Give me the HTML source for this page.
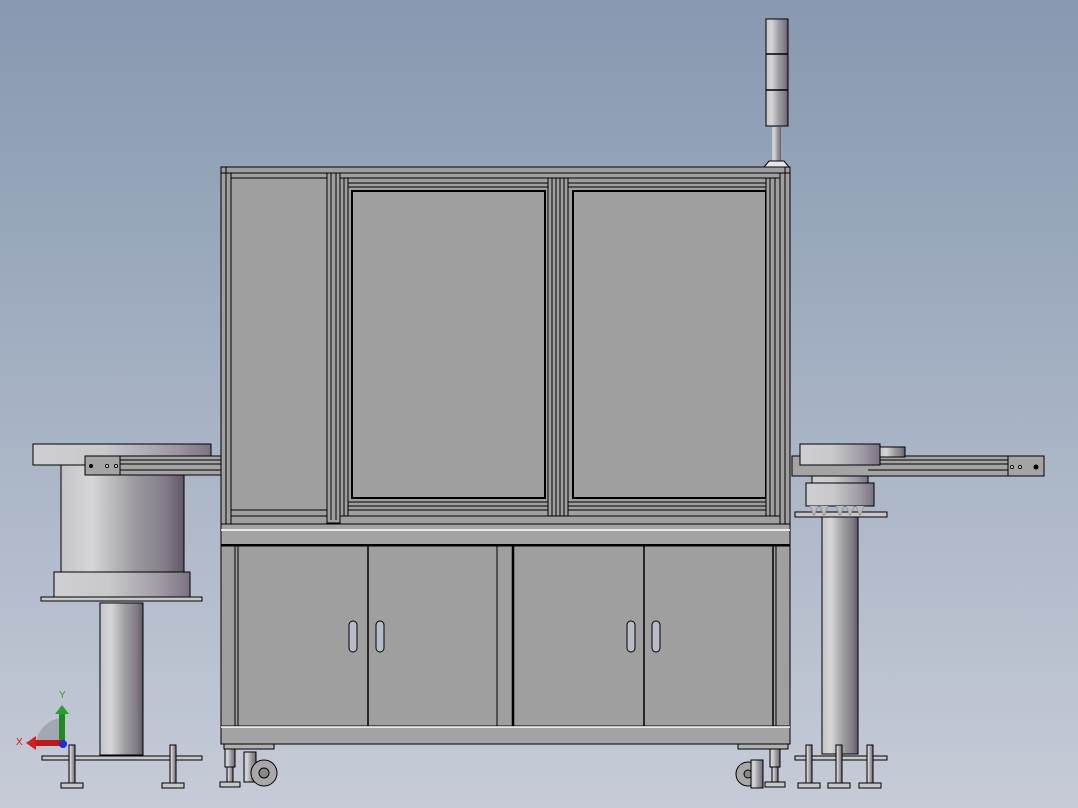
<!DOCTYPE html>
<html><head><meta charset="utf-8"><style>
html,body{margin:0;padding:0;width:1078px;height:808px;overflow:hidden}
svg{display:block}
</style></head><body>
<svg width="1078" height="808" viewBox="0 0 1078 808" xmlns="http://www.w3.org/2000/svg">
<defs>
<linearGradient id="bg" x1="0" y1="0" x2="0" y2="1">
<stop offset="0" stop-color="#8798b0"/><stop offset="0.5" stop-color="#a6b2c4"/><stop offset="1" stop-color="#c6cbd7"/>
</linearGradient>
<linearGradient id="cyl" x1="0" y1="0" x2="1" y2="0">
<stop offset="0" stop-color="#c4c4c6"/><stop offset="0.25" stop-color="#d6d6d8"/><stop offset="0.6" stop-color="#9c9a9f"/><stop offset="0.85" stop-color="#837c88"/><stop offset="1" stop-color="#5f5866"/>
</linearGradient>
<linearGradient id="disc" x1="0" y1="0" x2="1" y2="0">
<stop offset="0" stop-color="#cfcfd1"/><stop offset="0.4" stop-color="#c9c9cb"/><stop offset="0.8" stop-color="#9d97a2"/><stop offset="1" stop-color="#7a7280"/>
</linearGradient>
</defs>
<rect width="1078" height="808" fill="url(#bg)"/>

<g stroke="#000" stroke-width="1">
<!-- tower light -->
<rect x="766" y="19" width="22" height="107" fill="url(#cyl)"/>
<line x1="766" y1="54" x2="788" y2="54" stroke-width="1.5"/>
<line x1="766" y1="90" x2="788" y2="90" stroke-width="1.5"/>
<rect x="772" y="127" width="9" height="34" fill="url(#cyl)" stroke="none"/>
<path d="M764 167 L769 161 H784 L789 167 Z" fill="#e6e6e6"/>

<!-- left feeder -->
<rect x="61" y="465" width="123" height="107" fill="url(#cyl)"/>
<rect x="54" y="572" width="136" height="25" fill="url(#disc)"/>
<rect x="41" y="597" width="161" height="4" fill="#c8c8ca"/>
<rect x="100" y="603" width="43" height="152" fill="url(#cyl)"/>
<rect x="33" y="444" width="178" height="21" fill="url(#disc)"/>
<rect x="42" y="756" width="160" height="4" fill="#c8c8ca"/>
<rect x="69" y="745" width="6" height="38" fill="url(#cyl)"/>
<rect x="61" y="783" width="22" height="5" fill="#c8c8ca"/>
<rect x="170" y="745" width="6" height="38" fill="url(#cyl)"/>
<rect x="162" y="783" width="22" height="5" fill="#c8c8ca"/>
<!-- left conveyor -->
<rect x="85" y="456" width="136" height="19" fill="#a4a4a4"/>
<line x1="120" y1="460" x2="221" y2="460"/><line x1="120" y1="464" x2="221" y2="464"/><line x1="120" y1="470" x2="221" y2="470"/>
<line x1="120" y1="456" x2="120" y2="475"/>
<circle cx="91" cy="466" r="1.5" fill="#000"/><circle cx="107" cy="466" r="1.5" fill="#fff"/><circle cx="116" cy="466" r="1.5" fill="#fff"/>

<!-- right feeder -->
<rect x="822" y="517" width="36" height="237" fill="url(#cyl)"/>
<rect x="795" y="512" width="92" height="5" fill="#c8c8ca"/>
<rect x="806" y="483" width="68" height="23" fill="url(#disc)"/>
<path d="M810 506 l4 10 l4 -10 M820 506 l4 10 l4 -10 M836 506 l4 10 l4 -10 M846 506 l4 10 l4 -10 M856 506 l4 10 l4 -10" fill="#bbb" stroke="#999"/>
<rect x="812" y="465" width="56" height="18" fill="url(#disc)"/>
<rect x="792" y="456" width="252" height="20" fill="#a4a4a4"/>
<line x1="868" y1="460" x2="1008" y2="460"/><line x1="868" y1="464" x2="1008" y2="464"/><line x1="868" y1="470" x2="1008" y2="470"/>
<line x1="1008" y1="456" x2="1008" y2="476"/>
<circle cx="1012" cy="467" r="1.5" fill="#fff"/><circle cx="1020" cy="467" r="1.5" fill="#fff"/><circle cx="1036" cy="467" r="2" fill="#000"/>
<rect x="800" y="444" width="80" height="21" fill="url(#disc)"/>
<rect x="880" y="447" width="25" height="10" fill="url(#cyl)"/>
<rect x="795" y="756" width="92" height="4" fill="#c8c8ca"/>
<rect x="806" y="745" width="6" height="38" fill="url(#cyl)"/>
<rect x="798" y="783" width="22" height="5" fill="#c8c8ca"/>
<rect x="836" y="745" width="6" height="38" fill="url(#cyl)"/>
<rect x="828" y="783" width="22" height="5" fill="#c8c8ca"/>
<rect x="867" y="745" width="6" height="38" fill="url(#cyl)"/>
<rect x="859" y="783" width="22" height="5" fill="#c8c8ca"/>

<!-- upper frame -->
<rect x="221" y="167" width="569" height="357" fill="#9f9f9f"/>
<line x1="221" y1="173" x2="790" y2="173"/><line x1="231" y1="178" x2="780" y2="178"/>
<line x1="226" y1="167" x2="226" y2="524"/><line x1="231" y1="173" x2="231" y2="524"/>
<line x1="785" y1="167" x2="785" y2="524"/><line x1="780" y1="173" x2="780" y2="524"/>
<line x1="231" y1="510" x2="780" y2="510"/><line x1="231" y1="516" x2="780" y2="516"/>
<!-- left post -->
<rect x="327" y="173" width="13" height="350" fill="#9f9f9f"/>
<line x1="331" y1="173" x2="331" y2="520"/><line x1="336" y1="173" x2="336" y2="520"/>
<rect x="340" y="178" width="8" height="338" fill="#9f9f9f"/>
<line x1="344" y1="178" x2="344" y2="516"/>
<!-- door 1 -->
<line x1="348" y1="183" x2="548" y2="183"/><line x1="348" y1="187" x2="548" y2="187"/>
<rect x="352" y="191" width="193" height="307" fill="#9f9f9f" stroke-width="2"/>
<line x1="348" y1="502" x2="548" y2="502"/><line x1="348" y1="506" x2="548" y2="506"/>
<!-- center post -->
<rect x="548" y="178" width="20" height="338" fill="#9f9f9f"/>
<line x1="552" y1="178" x2="552" y2="516"/><line x1="556" y1="178" x2="556" y2="516"/><line x1="560" y1="178" x2="560" y2="516"/><line x1="564" y1="178" x2="564" y2="516"/>
<!-- door 2 -->
<line x1="568" y1="183" x2="766" y2="183"/><line x1="568" y1="187" x2="766" y2="187"/>
<rect x="573" y="191" width="193" height="307" fill="#9f9f9f" stroke-width="2"/>
<line x1="568" y1="502" x2="766" y2="502"/><line x1="568" y1="506" x2="766" y2="506"/>
<rect x="766" y="178" width="14" height="338" fill="#9f9f9f"/>
<line x1="770" y1="178" x2="770" y2="516"/><line x1="775" y1="178" x2="775" y2="516"/>

<!-- middle band -->
<rect x="221" y="524" width="569" height="22" fill="#a3a3a3"/>
<line x1="221" y1="530" x2="790" y2="530" stroke="#fff" stroke-width="1.5"/>
<line x1="221" y1="545" x2="790" y2="545" stroke-width="2"/>

<!-- cabinet -->
<rect x="221" y="546" width="569" height="180" fill="#9f9f9f"/>
<line x1="238" y1="546" x2="238" y2="726"/><line x1="235" y1="546" x2="235" y2="726"/>
<line x1="773" y1="546" x2="773" y2="726" stroke-width="1.5"/><line x1="776" y1="546" x2="776" y2="726"/>
<line x1="368" y1="546" x2="368" y2="726" stroke-width="1.5"/>
<line x1="497" y1="546" x2="497" y2="726"/>
<line x1="513" y1="546" x2="513" y2="726" stroke-width="2.5"/>
<line x1="644" y1="546" x2="644" y2="726" stroke-width="1.5"/>
<rect x="349" y="621" width="8" height="31" rx="4" fill="#b8bcc6"/>
<rect x="376" y="621" width="8" height="31" rx="4" fill="#b8bcc6"/>
<rect x="627" y="621" width="8" height="31" rx="4" fill="#b8bcc6"/>
<rect x="652" y="621" width="8" height="31" rx="4" fill="#b8bcc6"/>
<rect x="221" y="726" width="569" height="18" fill="#a3a3a3"/>
<line x1="221" y1="727" x2="790" y2="727" stroke="#fff" stroke-width="1.5"/>

<!-- casters left -->
<rect x="224" y="744" width="50" height="5" fill="#b0b0b0"/>
<rect x="225" y="749" width="10" height="18" fill="url(#cyl)"/>
<rect x="227" y="767" width="6" height="15" fill="url(#cyl)"/>
<rect x="220" y="782" width="20" height="5" fill="#c8c8ca"/>
<rect x="244" y="752" width="12" height="30" fill="url(#cyl)"/>
<circle cx="264" cy="773" r="13" fill="#a8a8a8"/><circle cx="264" cy="773" r="5" fill="#888"/>
<!-- casters right -->
<rect x="738" y="744" width="50" height="5" fill="#b0b0b0"/>
<rect x="770" y="749" width="10" height="18" fill="url(#cyl)"/>
<rect x="772" y="767" width="6" height="15" fill="url(#cyl)"/>
<rect x="765" y="782" width="20" height="5" fill="#c8c8ca"/>
<circle cx="748" cy="774" r="12" fill="#a8a8a8"/><circle cx="748" cy="774" r="4" fill="#888"/>
<rect x="751" y="760" width="12" height="28" fill="url(#cyl)"/>
</g>

<!-- axis triad -->
<path d="M36 745 A28 28 0 0 1 62 718 V745 Z" fill="#9aa0aa" opacity="0.8"/>
<rect x="59" y="712" width="6" height="32" fill="#1e8c1e"/>
<path d="M55 714 L62 705 L69 714 Z" fill="#2aa02a"/>
<rect x="34" y="740" width="28" height="6" fill="#c01818"/>
<path d="M36 736 L26 743 L36 750 Z" fill="#d02020"/>
<circle cx="63" cy="744" r="4" fill="#1a2ee0"/>
<text x="59" y="698" font-family="Liberation Sans, sans-serif" font-size="10" fill="#1ab01a">Y</text>
<text x="16" y="745" font-family="Liberation Sans, sans-serif" font-size="10" fill="#e01010">X</text>
</svg>
</body></html>
